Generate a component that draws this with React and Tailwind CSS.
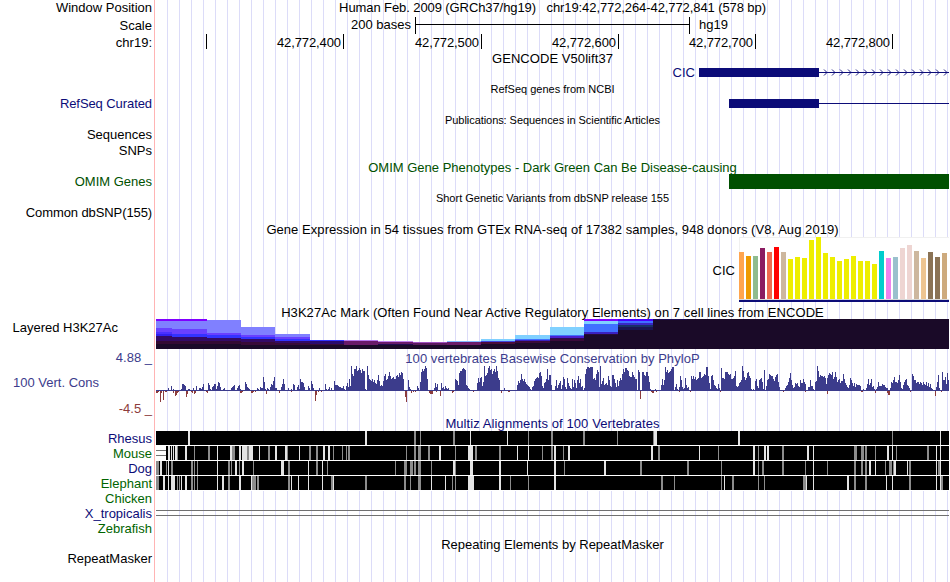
import { clsx } from "clsx";

const NAVY = "#0c0c78";

const CONSERVATION = [
  "0000000000", "0031050200", "0000127765", "1022000310", "5013324700",
  "1086204577", "2598400231", "0100134561", "0356200009", "7432000011",
  "0320433e92", "0321476ae3", "3100147c70", "0130021761", "1462c99841",
  "01530a7300", "0003100107", "21241300a6", "6654433521", "584c5phfmm",
  "pklnlimkk2", "1pgcbac9b8", "7bga565afh", "bcfjfcdecc", "fgeigjic00",
  "00b4200010", "05319jmkmp", "nc10001038", "4710083425", "323000100c",
  "ba6ikkmnml", "6532001000", "08d9de59pf", "ginplmhkmj", "pkdb100031",
  "0100000000", "06a8bhcac9", "76542145ac", "dedijf5389", "cmbgg60115",
  "b368a26ec4", "2d8532c4b8", "3bf8c4513h", "moonooocdb", "hlj4p7ad67",
  "86fb54ggc8", "4b5adbhmjn", "nlkfeejgec", "c1lj00jjgf", "jjf9200002",
  "010016c6bo", "jlijkmoo14", "7204fb423d", "63410fcfce", "bcdjjdefhg",
  "oof82fgb65", "32730nddcj", "jjhghccdfk", "54589bpkeb", "dijfd2121a",
  "c53bcd92l1", "5bchgffcae", "gh94011003", "569dib6348", "7854b88c97",
  "1144b55219", "apkegffefd", "7dgihgjcej", "e9bc8aahc8", "6436db8584",
  "7666510200", "37c68c4520", "2495557664", "3301398be9", "98bg93269b",
  "c65301hfbb", "8997986976", "9584732110", "49g301jbbe", "7ib",
].join("");

// [x, depth]
const ACCELERATION = [
  [156, 2], [157, 2], [158, 1], [160, 11], [161, 2], [163, 9], [165, 1], [166, 1],
  [173, 2], [175, 5], [176, 4], [177, 2], [178, 1], [186, 6], [187, 3], [191, 1],
  [192, 2], [194, 3], [195, 2], [206, 1], [207, 2], [240, 2], [241, 2], [242, 1],
  [251, 2], [252, 2], [253, 1], [255, 1], [266, 3], [279, 2], [291, 1], [315, 10],
  [316, 4], [318, 1], [321, 1], [405, 6], [406, 11], [411, 2], [413, 1], [415, 1],
  [429, 2], [430, 3], [431, 3], [432, 3], [436, 1], [440, 5], [452, 2], [453, 1],
  [473, 1], [501, 2], [508, 1], [509, 1], [640, 8], [651, 1], [652, 2], [653, 2],
  [656, 1], [679, 1], [690, 1], [720, 1], [783, 1], [805, 1], [827, 3], [861, 1],
  [862, 1], [875, 2], [887, 2], [888, 4], [889, 4], [910, 1], [935, 5], [941, 1],
];

// start, end, then [top, colour] of each band down to the base
const H3K27AC = [
  [156, 172, [[319, "#8000ff"], [321, "#8080ff"], [328, "#6a40ff"], [332, "#4a30ff"], [334, "#3020f0"], [336, "#330a66"], [341, "#330a33"], [344, "#1a0a28"]]],
  [172, 207, [[319, "#8000ff"], [321, "#8080ff"], [329, "#6a40ff"], [334, "#3333ff"], [337, "#330a66"], [341, "#330a33"], [344, "#1a0a28"]]],
  [207, 241, [[320, "#8080ff"], [333, "#6a40ff"], [335, "#3333ff"], [338, "#330a66"], [341, "#330a33"], [344, "#1a0a28"]]],
  [241, 275, [[327, "#8080ff"], [335, "#6a40ff"], [337, "#3333ff"], [339, "#330a66"], [342, "#380a38"], [345, "#1a0a28"]]],
  [275, 310, [[334, "#8080ff"], [337, "#6a40ff"], [339, "#3333ff"], [341, "#330a66"], [343, "#380a38"], [345, "#1a0a28"]]],
  [310, 344, [[340, "#3333ff"], [341, "#2a0a70"], [344, "#380a38"], [345, "#1a0a28"]]],
  [344, 378, [[340, "#b878f0"], [341, "#6a1a6a"], [345, "#1a0a28"]]],
  [378, 413, [[341, "#c080f0"], [342, "#6a1a6a"], [344, "#200a50"], [345, "#1a0a28"]]],
  [413, 447, [[342, "#a050c0"], [343, "#5c1a60"], [345, "#1a0a28"]]],
  [447, 481, [[341, "#80b8ff"], [342, "#6a1a6a"], [345, "#1a0a28"]]],
  [481, 515, [[339, "#80d0ff"], [341, "#4048e0"], [342, "#4a0a3a"], [344, "#1a0a28"]]],
  [515, 550, [[335, "#80d0ff"], [339, "#4070ff"], [340, "#3a20c0"], [341, "#3a0a3a"], [343, "#1a0a28"]]],
  [550, 584, [[327, "#80d0ff"], [335, "#4070ff"], [336, "#4a20d0"], [338, "#2a0a50"], [339, "#3a0a3a"], [341, "#1a0a28"]]],
  [584, 618, [[319, "#8000ff"], [321, "#80d0ff"], [324, "#4070ff"], [332, "#3a20c0"], [334, "#2a0a38"], [335, "#1a0a28"]]],
  [618, 653, [[319, "#4800ff"], [321, "#4070ff"], [323, "#3828c8"], [325, "#183068"], [327, "#1a1450"], [330, "#1a0a28"]]],
  [653, 687, [[319, "#1c0a50"], [320, "#1a0a28"]]],
  [687, 949, [[319, "#1a0a28"]]],
];

const GTEX = [
  [47, "#ffa54f"], [43, "#ee9a00"], [43, "#8fbc8f"], [51, "#8b1c62"], [47, "#ee6a50"],
  [52, "#ff0000"], [47, "#cdb79e"], [40, "#eeee00"], [42, "#eeee00"], [41, "#eeee00"],
  [59, "#eeee00"], [62, "#eeee00"], [46, "#eeee00"], [42, "#eeee00"], [38, "#eeee00"],
  [40, "#eeee00"], [43, "#eeee00"], [38, "#eeee00"], [38, "#eeee00"], [35, "#eeee00"],
  [48, "#00cdcd"], [41, "#ee82ee"], [42, "#9ac0cd"], [51, "#eed5d2"], [54, "#eed5d2"],
  [48, "#cdb79e"], [41, "#eec591"], [47, "#8b7355"], [42, "#8b7355"], [46, "#cdaa7d"],
];

const L = "#e4e4e4";
const G = "#8c8c8c";

const ALIGNMENTS = [
  {
    name: "Rhesus",
    color: "text-[#0c0c78]",
    start: 156,
    marks: [
      [188, 2, L], [365, 2, L], [414, 2, G], [420, 1, G], [453, 2, G], [470, 1, L], [507, 1, L],
      [528, 1, G], [551, 2, G], [583, 2, G], [617, 1, G], [653, 1, G], [654, 3, L], [738, 2, L],
      [892, 1, G], [940, 1, L],
    ],
  },
  {
    name: "Mouse",
    color: "text-[#006400]",
    start: 166,
    marks: [
      [168, 2, L], [171, 1, L], [173, 1, L], [175, 2, L], [177, 1, G], [185, 2, L], [194, 1, G],
      [208, 2, G], [217, 1, L], [230, 2, L], [232, 3, G], [239, 2, L], [242, 5, L], [247, 2, G],
      [249, 4, L], [259, 1, L], [268, 2, G], [275, 2, L], [285, 2, L], [287, 1, G], [299, 1, L],
      [309, 2, G], [316, 2, G], [323, 2, L], [328, 2, L], [333, 1, G], [342, 1, G], [346, 1, G],
      [348, 2, G], [406, 1, G], [414, 2, G], [418, 3, G], [428, 2, G], [439, 2, L], [455, 1, G],
      [468, 5, L], [475, 2, G], [499, 2, G], [517, 1, L], [528, 1, L], [542, 1, G], [551, 2, G],
      [554, 2, L], [563, 1, G], [568, 2, L], [651, 2, L], [658, 2, G], [699, 1, L], [718, 1, G],
      [753, 2, L], [758, 1, G], [764, 2, L], [767, 2, L], [782, 2, G], [807, 2, L], [813, 1, L],
      [854, 3, G], [861, 3, G], [865, 2, G], [875, 1, G], [887, 2, L], [892, 1, L], [896, 1, G],
      [927, 2, G], [936, 1, L], [940, 1, L],
    ],
  },
  {
    name: "Dog",
    color: "text-[#0c0c78]",
    start: 156,
    marks: [
      [156, 3, G], [160, 2, L], [166, 1, G], [168, 1, L], [171, 2, G], [191, 2, G], [194, 1, G],
      [197, 1, G], [217, 1, L], [228, 2, G], [231, 1, G], [235, 2, L], [239, 1, G], [242, 2, L],
      [253, 1, G], [281, 3, L], [288, 2, G], [308, 1, L], [316, 2, G], [322, 1, L], [327, 1, G],
      [395, 1, G], [404, 3, G], [410, 3, G], [414, 2, G], [418, 3, G], [431, 1, G], [453, 2, L],
      [455, 1, G], [470, 3, L], [499, 2, L], [527, 1, L], [554, 2, L], [564, 1, G], [604, 2, L],
      [640, 2, G], [687, 2, G], [721, 1, G], [753, 2, L], [758, 1, G], [762, 2, G], [782, 2, G],
      [805, 1, G], [813, 1, L], [827, 1, G], [854, 2, G], [861, 2, G], [865, 2, G], [869, 2, L],
      [875, 1, L], [885, 1, G], [889, 3, G], [893, 1, G], [894, 2, L], [907, 1, L], [909, 2, G],
      [936, 1, L], [938, 2, G], [940, 1, L],
    ],
  },
  {
    name: "Elephant",
    color: "text-[#006400]",
    start: 156,
    marks: [
      [156, 3, G], [163, 2, L], [168, 1, L], [171, 4, L], [177, 1, G], [179, 1, G], [181, 1, L],
      [185, 2, L], [191, 2, G], [194, 1, G], [197, 1, G], [217, 1, L], [222, 2, L], [228, 2, G],
      [239, 2, L], [251, 1, L], [252, 4, G], [257, 2, G], [288, 2, G], [291, 1, L], [298, 1, L],
      [308, 1, L], [322, 1, L], [331, 2, G], [333, 1, L], [365, 2, G], [404, 2, G], [410, 1, G],
      [418, 3, G], [431, 1, L], [445, 1, L], [452, 1, G], [455, 1, G], [468, 6, L], [499, 2, L],
      [510, 1, G], [528, 1, G], [554, 2, L], [661, 2, G], [674, 1, G], [721, 1, G], [724, 1, L],
      [732, 2, G], [758, 1, G], [764, 1, G], [803, 3, G], [806, 1, L], [813, 1, L], [847, 2, L],
      [854, 2, G], [865, 2, G], [886, 1, L], [892, 1, L], [909, 2, G], [936, 1, L], [940, 1, L],
      [941, 2, G],
    ],
  },
];

const ARROWS = Array.from({ length: 16 }, (_, i) => 826 + i * 8);

function Row({ height, label, labelClass, children, trackClass }) {
  return (
    <div className={clsx("flex shrink-0", height)}>
      <div className={clsx("flex w-[154px] shrink-0 items-center justify-end whitespace-nowrap pr-[2px]", labelClass)}>
        {label}
      </div>
      <div
        className={clsx(
          "flex min-w-0 flex-1 border-l border-[#ffb4b4] bg-[repeating-linear-gradient(90deg,transparent_0_11px,#dcdcf8_11px_12px)] bg-origin-content bg-clip-content pl-px",
          trackClass
        )}
      >
        {children}
      </div>
    </div>
  );
}

function TitleRow({ height, className, children }) {
  return (
    <Row height={height} trackClass="items-center justify-center">
      <span className={clsx("whitespace-pre", className)}>{children}</span>
    </Row>
  );
}

// x runs in chart pixels, so every track shares one horizontal scale
function Track({ top = 0, height, children }) {
  return (
    <svg
      width="793"
      height={height}
      viewBox={`156 ${top} 793 ${height}`}
      shapeRendering="crispEdges"
      className="block shrink-0"
    >
      {children}
    </svg>
  );
}

function Tick({ label, width }) {
  return (
    <div className={clsx("flex h-[15px] shrink-0 items-center justify-end border-r border-black pr-[2px]", width)}>
      <span className="pt-px tracking-[-0.1px]">{label}</span>
    </div>
  );
}

function DoubleLine({ from, to }) {
  return (
    <>
      <rect x={from} y="4" width={to - from} height="1" fill="#707070" />
      <rect x={from} y="9" width={to - from} height="1" fill="#707070" />
    </>
  );
}

export default function App() {
  return (
    <div className="h-[582px] w-[950px] overflow-hidden bg-white">
      <div className="flex h-full w-[949px] flex-col font-['Liberation_Sans',Arial,sans-serif] text-[13px] leading-[15px] text-black">
        <Row height="h-[17px]" label="Window Position" labelClass="pb-[2px]" trackClass="justify-center">
          <span className="whitespace-pre tracking-[-0.09px]">
            {"Human Feb. 2009 (GRCh37/hg19)   chr19:42,772,264-42,772,841 (578 bp)"}
          </span>
        </Row>
        <Row height="h-[17px]" label="Scale" trackClass="items-center">
          <span className="w-[255px] pb-[2px] text-right">200 bases</span>
          <div className="ml-[4px] flex h-[17px] w-[275px] items-center border-x border-black pb-[2px]">
            <div className="h-px w-full bg-black" />
          </div>
          <span className="ml-[9px] pb-[2px]">hg19</span>
        </Row>
        <Row height="h-[17px]" label="chr19:">
          <Tick width="w-[51px]" />
          <Tick width="w-[137px]" label="42,772,400" />
          <Tick width="w-[138px]" label="42,772,500" />
          <Tick width="w-[137px]" label="42,772,600" />
          <Tick width="w-[137px]" label="42,772,700" />
          <Tick width="w-[137px]" label="42,772,800" />
        </Row>

        <TitleRow height="h-[15px]" className="tracking-[0.06px]">GENCODE V50lift37</TitleRow>
        <Row height="h-[15px]">
          <span className="-mt-px w-[539px] text-right text-[#0c0c78]">CIC</span>
          <svg width="254" height="15" viewBox="695 66 254 15" className="block shrink-0">
            <rect x="699" y="68" width="120" height="9" fill={NAVY} />
            <rect x="819" y="72" width="130" height="1" fill={NAVY} />
            {ARROWS.map((x) => (
              <path key={x} d={`M${x - 2} 69.5l3 3l-3 3`} fill="none" stroke={NAVY} strokeWidth="0.9" />
            ))}
          </svg>
        </Row>

        <TitleRow height="h-[15px]" className="pt-[2px] text-[11px]">RefSeq genes from NCBI</TitleRow>
        <Row height="h-[15px]" label="RefSeq Curated" labelClass="tracking-[-0.08px] text-[#0c0c78]">
          <Track top={96} height={15}>
            <rect x="729" y="99" width="90" height="9" fill={NAVY} />
            <rect x="819" y="103" width="130" height="1" fill={NAVY} />
          </Track>
        </Row>

        <TitleRow height="h-[16px]" className="pt-[2px] text-[11px] tracking-[-0.06px]">
          Publications: Sequences in Scientific Articles
        </TitleRow>
        <Row height="h-[15px]" label="Sequences" />
        <Row height="h-[16px]" label="SNPs" />

        <TitleRow height="h-[16px]" className="pt-[3px] text-[#005000]">
          OMIM Gene Phenotypes - Dark Green Can Be Disease-causing
        </TitleRow>
        <Row height="h-[15px]" label="OMIM Genes" labelClass="text-[#005000]">
          <Track top={174} height={15}>
            <rect x="729" y="174" width="220" height="15" fill="#005000" />
          </Track>
        </Row>

        <TitleRow height="h-[16px]" className="pt-[2px] text-[11px]">
          Short Genetic Variants from dbSNP release 155
        </TitleRow>
        <Row height="h-[15px]" label="Common dbSNP(155)" labelClass="tracking-[-0.1px]" />

        <TitleRow height="h-[17px]" className="pt-[2px] tracking-[0.055px]">
          Gene Expression in 54 tissues from GTEx RNA-seq of 17382 samples, 948 donors (V8, Aug 2019)
        </TitleRow>
        <Row height="h-[66px]" trackClass="items-center">
          <span className="w-[579px] text-right">CIC</span>
          <svg width="214" height="66" viewBox="735 237 214 66" shapeRendering="crispEdges" className="block shrink-0">
            <rect x="739" y="237" width="210" height="62" fill="#fff" />
            <rect x="739" y="237" width="210" height="1" fill="#f0f0f0" />
            <rect x="739" y="237" width="1" height="62" fill="#f0f0f0" />
            {GTEX.map(([h, color], i) => (
              <rect key={i} x={739 + i * 7} y={299 - h} width="5" height={h} fill={color} />
            ))}
            <rect x="739" y="299" width="210" height="1" fill="#d8d8d8" />
            <rect x="739" y="300" width="210" height="2" fill={NAVY} />
          </svg>
        </Row>

        <TitleRow height="h-[16px]" className="pt-[3px] tracking-[0.06px]">
          H3K27Ac Mark (Often Found Near Active Regulatory Elements) on 7 cell lines from ENCODE
        </TitleRow>
        <Row height="h-[31px]" label="Layered H3K27Ac" labelClass="pr-[36px] pb-[15px]">
          <Track top={319} height={31}>
            {H3K27AC.map(([from, to, bands]) =>
              bands.map(([y, color]) => (
                <rect key={`${from}-${y}`} x={from} y={y} width={to - from} height={349 - y} fill={color} />
              ))
            )}
          </Track>
        </Row>

        <Row
          height="h-[66px]"
          labelClass="text-[#3c3c8c]"
          trackClass="flex-col"
          label={
            <div className="flex h-full w-full flex-col justify-between text-right">
              <span>4.88 _</span>
              <span className="pb-px pl-[13px] text-left">100 Vert. Cons</span>
              <span className="text-[#8c3c3c]">-4.5 _</span>
            </div>
          }
        >
          <span className="h-[15px] pt-px text-center tracking-[0.05px] text-[#3c3c8c]">
            100 vertebrates Basewise Conservation by PhyloP
          </span>
          <Track top={365} height={51}>
            <rect x="156" y="390" width="793" height="1" fill="#3c3c8c" />
            {[...CONSERVATION].map((c, i) => {
              const h = parseInt(c, 36);
              return h > 0 && <rect key={i} x={156 + i} y={391 - h} width="1" height={h} fill="#3c3c8c" />;
            })}
            {ACCELERATION.map(([x, h]) => (
              <rect key={x} x={x} y="391" width="1" height={h} fill="#8c3c3c" />
            ))}
          </Track>
        </Row>

        <TitleRow height="h-[15px]" className="tracking-[0.09px] text-[#0c0c78]">
          Multiz Alignments of 100 Vertebrates
        </TitleRow>
        {ALIGNMENTS.map(({ name, color, start, marks }) => (
          <Row key={name} height="h-[15px]" label={name} labelClass={color}>
            <Track height={15}>
              <rect x="156" y="14" width="793" height="1" fill="#fff" />
              {start > 156 && <DoubleLine from={156} to={start} />}
              <rect x={start} y="0" width={949 - start} height="14" fill="#000" />
              {marks.map(([x, w, fill]) => (
                <rect key={x} x={x} y="0" width={w} height="14" fill={fill} />
              ))}
            </Track>
          </Row>
        ))}
        <Row height="h-[15px]" label="Chicken" labelClass="text-[#006400]" />
        <Row height="h-[15px]" label="X_tropicalis" labelClass="text-[#0c0c78]">
          <Track height={15}>
            <DoubleLine from={156} to={949} />
          </Track>
        </Row>
        <Row height="h-[15px]" label="Zebrafish" labelClass="text-[#006400]" />

        <TitleRow height="h-[15px]" className="pt-[2px]">Repeating Elements by RepeatMasker</TitleRow>
        <Row height="h-[15px]" label="RepeatMasker" />
        <Row height="flex-1" />
      </div>
    </div>
  );
}
